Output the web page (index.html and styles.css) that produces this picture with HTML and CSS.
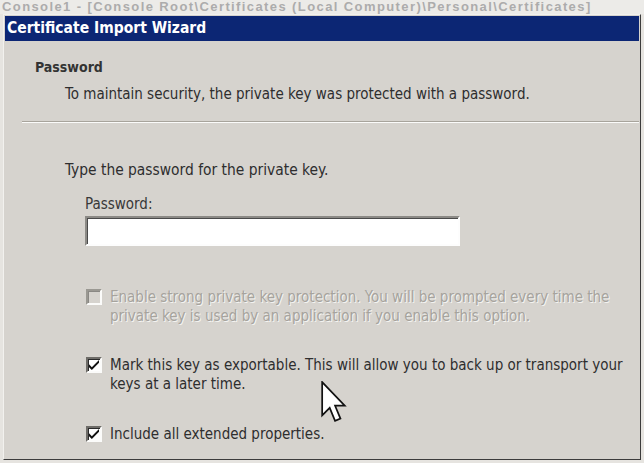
FILE: index.html
```html
<!DOCTYPE html>
<html lang="en">
<head>
    <meta charset="UTF-8">
    <title>Certificate Import Wizard</title>
    <link rel="stylesheet" href="styles.css">
</head>
<body>
    <!-- window behind the dialog, only its title shows -->
    <div class="behind">
        <span>Console1 - [Console Root\Certificates (Local Computer)\Personal\Certificates]</span>
    </div>

    <div class="dialog">
        <div class="titlebar">Certificate Import Wizard</div>

        <div class="header">
            <div class="header-title">Password</div>
            <div class="header-sub">To maintain security, the private key was protected with a password.</div>
        </div>
        <div class="separator"></div>

        <div class="content">
            <p class="intro">Type the password for the private key.</p>

            <div class="field">
                <label for="pwd">Password:</label>
                <input type="password" id="pwd" class="textbox">
            </div>

            <div class="option disabled">
                <span class="checkbox"></span>
                <span class="option-text">Enable strong private key protection. You will be prompted every time the<br>private key is used by an application if you enable this option.</span>
            </div>

            <div class="option gap-a">
                <span class="checkbox checked">
                    <svg viewBox="0 0 7 7" width="10" height="10"><path d="M0 3 L2 5 L7 0 L7 2 L2 7 L0 5 Z" fill="#111"/></svg>
                </span>
                <span class="option-text">Mark this key as exportable. This will allow you to back up or transport your<br>keys at a later time.</span>
            </div>

            <div class="option gap-b">
                <span class="checkbox checked">
                    <svg viewBox="0 0 7 7" width="10" height="10"><path d="M0 3 L2 5 L7 0 L7 2 L2 7 L0 5 Z" fill="#111"/></svg>
                </span>
                <span class="option-text">Include all extended properties.</span>
            </div>
        </div>
    </div>

    <svg class="cursor" viewBox="0 0 12 20" width="26" height="43">
        <path d="M0.5 0.5 L0.5 16 L4 12.5 L6.5 18.5 L9 17.5 L6.5 11.5 L11 11.5 Z" fill="#fff" stroke="#111" stroke-width="0.8" stroke-linejoin="miter"/>
    </svg>
</body>
</html>
```

FILE: styles.css
```css
body {
    margin: 0;
    padding: 0;
    background: #e6e4e0;
    font-family: "DejaVu Sans Condensed", "DejaVu Sans", sans-serif;
    color: #2e2e2e;
    width: 644px;
    height: 463px;
    overflow: hidden;
    position: relative;
}

.behind {
    height: 14px;
    overflow: hidden;
    background: #ecebe8;
    padding-left: 2px;
}

.behind span {
    display: block;
    font-family: "Liberation Sans", Arial, sans-serif;
    font-size: 13px;
    font-weight: bold;
    line-height: 14px;
    color: #acacac;
    white-space: nowrap;
    letter-spacing: 1.4px;
}

.dialog {
    margin-left: 3px;
    width: 638px;
    height: 446px;
    box-sizing: border-box;
    background: #d6d3ce;
    border: 1px solid;
    border-color: #f2f1ee #3c3c3c #3c3c3c #f2f1ee;
    padding: 1px;
}

.titlebar {
    height: 25px;
    line-height: 24px;
    background: #0c2674;
    color: #fff;
    font-weight: bold;
    font-size: 15.5px;
    padding-left: 2px;
}

.header {
    padding: 17px 0 0 30px;
}

.header-title {
    font-weight: bold;
    font-size: 14px;
    line-height: 18px;
    color: #333;
}

.header-sub {
    font-size: 15px;
    line-height: 18px;
    margin: 9px 0 0 30px;
}

.separator {
    margin: 18px 0 0 17px;
    height: 1px;
    background: #a8a49c;
    border-bottom: 1px solid #fbfbfa;
}

.content {
    padding: 38px 0 0 60px;
    font-size: 15px;
}

.intro {
    margin: 0;
    font-size: 15.4px;
    line-height: 18px;
}

.field {
    margin: 16px 0 0 20px;
    display: flex;
    flex-direction: column;
    gap: 3px;
}

.field label {
    line-height: 18px;
    color: #383838;
}

.textbox {
    width: 375px;
    height: 30px;
    box-sizing: border-box;
    border: 2px solid;
    border-color: #8c8a86 #fdfdfd #fdfdfd #8c8a86;
    box-shadow: inset 1px 1px 0 #4a4a4a;
    background: #fff;
    outline: none;
}

.option {
    display: flex;
    gap: 8px;
    margin: 42px 0 0 21px;
    line-height: 19px;
}

.gap-a {
    margin-top: 30px;
}

.gap-b {
    margin-top: 31px;
}

.checkbox {
    flex: none;
    width: 16px;
    height: 16px;
    margin-top: 1px;
    box-sizing: border-box;
    border: 2px solid;
    border-color: #6e6c68 #fbfbfa #fbfbfa #6e6c68;
    box-shadow: inset 1px 1px 0 #2a2a2a;
    background: #fff;
    display: flex;
    align-items: center;
    justify-content: center;
}

.disabled .checkbox {
    background: #d6d3ce;
    border-color: #9a9892 #fbfbfa #fbfbfa #9a9892;
    box-shadow: inset 1px 1px 0 #8a8884;
}

.disabled .option-text {
    color: #a6a39d;
    text-shadow: 1px 1px 0 #f4f3f1;
}

.cursor {
    position: absolute;
    left: 321px;
    top: 381px;
}
```
